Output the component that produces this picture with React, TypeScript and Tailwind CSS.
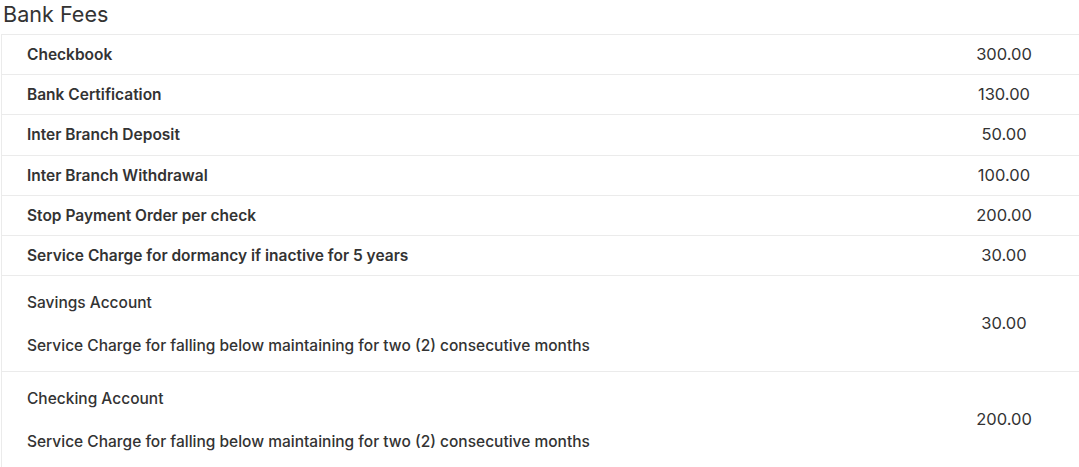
import React from "react";

const rows: { label: string; sub?: string; value: string }[] = [
  { label: "Checkbook", value: "300.00" },
  { label: "Bank Certification", value: "130.00" },
  { label: "Inter Branch Deposit", value: "50.00" },
  { label: "Inter Branch Withdrawal", value: "100.00" },
  { label: "Stop Payment Order per check", value: "200.00" },
  { label: "Service Charge for dormancy if inactive for 5 years", value: "30.00" },
  {
    label: "Savings Account",
    sub: "Service Charge for falling below maintaining for two (2) consecutive months",
    value: "30.00",
  },
  {
    label: "Checking Account",
    sub: "Service Charge for falling below maintaining for two (2) consecutive months",
    value: "200.00",
  },
];

export default function App() {
  return (
    <div
      className="w-[1079px] h-[467px] overflow-hidden bg-white text-[#333333]"
      style={{ fontFamily: 'Inter, "Liberation Sans", Arial, sans-serif' }}
    >
      <h1 className="pl-[3px] h-[34px] text-[21.6px] leading-[28px] font-normal text-[#333333]">
        Bank Fees
      </h1>
      <div className="ml-[1px] border-l border-t border-[#ebebeb]">
        {rows.map((r, i) => (
          <div
            key={i}
            className={`flex items-center ${i > 0 ? "border-t border-[#ebebeb]" : ""}`}
          >
            {r.sub ? (
              <div className="flex-1 pl-[25px] pt-[17px] pb-[15px] text-[15.5px] leading-[20px] font-medium">
                <div>{r.label}</div>
                <div className="mt-[23px]">{r.sub}</div>
              </div>
            ) : (
              <div className="flex-1 pl-[25px] py-[10px] text-[15.5px] leading-[19.2px] font-semibold">
                {r.label}
              </div>
            )}
            <div className="w-[150px] text-center text-[16.5px] leading-[19.2px]">{r.value}</div>
          </div>
        ))}
      </div>
    </div>
  );
}
